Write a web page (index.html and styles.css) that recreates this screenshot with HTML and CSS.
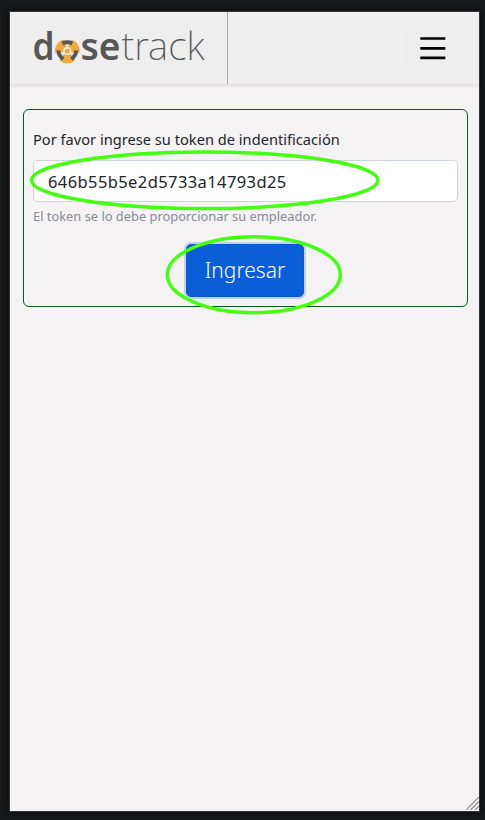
FILE: index.html
```html
<!DOCTYPE html>
<html lang="es">
<head>
<meta charset="utf-8">
<title>dosetrack</title>
<link rel="stylesheet" href="styles.css">
</head>
<body>
<div class="device">
  <header class="navbar">
    <div class="brand">
      <svg class="logo" width="190" height="66" viewBox="0 -12 190 66">
        <g class="logo-bold">
          <text x="-.5" y="36" textLength="22" lengthAdjust="spacingAndGlyphs">d</text>
          <text x="47.5" y="36" textLength="40" lengthAdjust="spacingAndGlyphs">se</text>
        </g>
        <text class="logo-light" x="88.5" y="36" textLength="83" lengthAdjust="spacingAndGlyphs">track</text>
        <g transform="translate(34.3 27)">
          <g fill="#f2a83b">
            <path id="blade" d="M-3.5 3L-7.8 9.2Q-5 12.3 0 12.3T7.8 9.2L3.5 3Z"/>
            <use href="#blade" transform="rotate(120)"/>
            <use href="#blade" transform="rotate(240)"/>
          </g>
          <g fill="none" stroke="#575756" stroke-width="3.8">
            <path id="arc" d="M-5 -7.5Q0 -10 5 -7.5"/>
            <use href="#arc" transform="rotate(120)"/>
            <use href="#arc" transform="rotate(240)"/>
          </g>
          <g stroke="#eee" stroke-width="1.5">
            <path d="M0 0V-6M0 0L-5.2 3M0 0L5.2 3"/>
            <circle r="3.3" fill="#f2a83b"/>
          </g>
        </g>
      </svg>
    </div>
    <button class="toggler" aria-label="Menú">
      <svg width="26" height="24" viewBox="0 0 26 24"><path d="M.3 2.5h25M.3 12.3h25M.3 21.8h25" stroke="#000" stroke-width="2.7"/></svg>
    </button>
  </header>
  <main class="card">
    <label class="label" for="token">Por favor ingrese su token de indentificación</label>
    <input class="token" id="token" value="646b55b5e2d5733a14793d25">
    <small class="hint">El token se lo debe proporcionar su empleador.</small>
    <button class="submit">Ingresar</button>
  </main>
  <svg class="grip" width="13" height="13" viewBox="0 0 13 13"><path d="M0 13L13 0M4.5 13L13 4.5M9 13L13 9" stroke="#888" stroke-width="1.2"/></svg>
  <svg class="marks" width="469" height="799" viewBox="10 12 469 799" fill="none" stroke="#4f1" stroke-width="3.5">
    <ellipse cx="204.7" cy="180.3" rx="173.3" ry="28.3"/>
    <ellipse cx="253.8" cy="274.7" rx="86.5" ry="38"/>
  </svg>
</div>
</body>
</html>
```
FILE: styles.css
```css
* { box-sizing: border-box; }
body {
  margin: 0;
  height: 820px;
  padding: 12px 6px 9px 10px;
  background: #18191b;
  font-family: "Noto Sans", sans-serif;
  color: #212529;
  overflow: hidden;
}
.device {
  position: relative;
  width: 469px;
  height: 799px;
  background: #f4f2f3;
  box-shadow: 0 0 0 1px #34363a, 0 0 8px 2px #0c0c0e;
}
.navbar {
  display: flex;
  justify-content: space-between;
  align-items: center;
  height: 72px;
  padding-right: 16px;
  background: #eee;
  box-shadow: 0 2px 4px rgba(0, 0, 0, .09);
}
.brand {
  width: 218px;
  height: 72px;
  padding-left: 23px;
  border-right: 1px solid #aaa;
}
.logo { display: block; overflow: visible; fill: #575756; font-size: 38px; }
.logo-bold { font-weight: 600; }
.logo-light { font-weight: 200; }
.toggler {
  display: flex;
  align-items: center;
  justify-content: center;
  width: 61px;
  height: 44px;
  padding: 0;
  border: 1px solid #f1f1f1;
  border-radius: 5px;
  background: none;
}
.card {
  display: flex;
  flex-direction: column;
  width: 445px;
  height: 198px;
  margin: 25px 0 0 13px;
  padding: 19px 9px 0;
  border: 1px solid #055a20;
  border-radius: 6px;
}
.label { font-size: 14.6px; line-height: 20px; letter-spacing: .02px; white-space: nowrap; }
.token {
  width: 425px;
  height: 42px;
  margin-top: 11px;
  padding: 0 14px;
  border: 1px solid #ced4da;
  border-radius: 5px;
  background: #fff;
  color: #212529;
  font: 16.5px "Noto Sans", sans-serif;
  letter-spacing: .4px;
}
.hint { margin-top: 5px; font-size: 12.87px; line-height: 18px; color: #868c93; }
.submit {
  width: 118px;
  height: 53px;
  margin: 19px 0 0 153px;
  padding: 0 0 1px;
  border: 1px solid #0a58ca;
  border-radius: 5px;
  background: #0b5ed7;
  box-shadow: 0 0 0 2px #bdd3f2;
  color: #fff;
  font: 300 21px "Noto Sans", sans-serif;
}
.grip { position: absolute; right: 0; bottom: 1px; }
.marks { position: absolute; inset: 0; pointer-events: none; }
```
